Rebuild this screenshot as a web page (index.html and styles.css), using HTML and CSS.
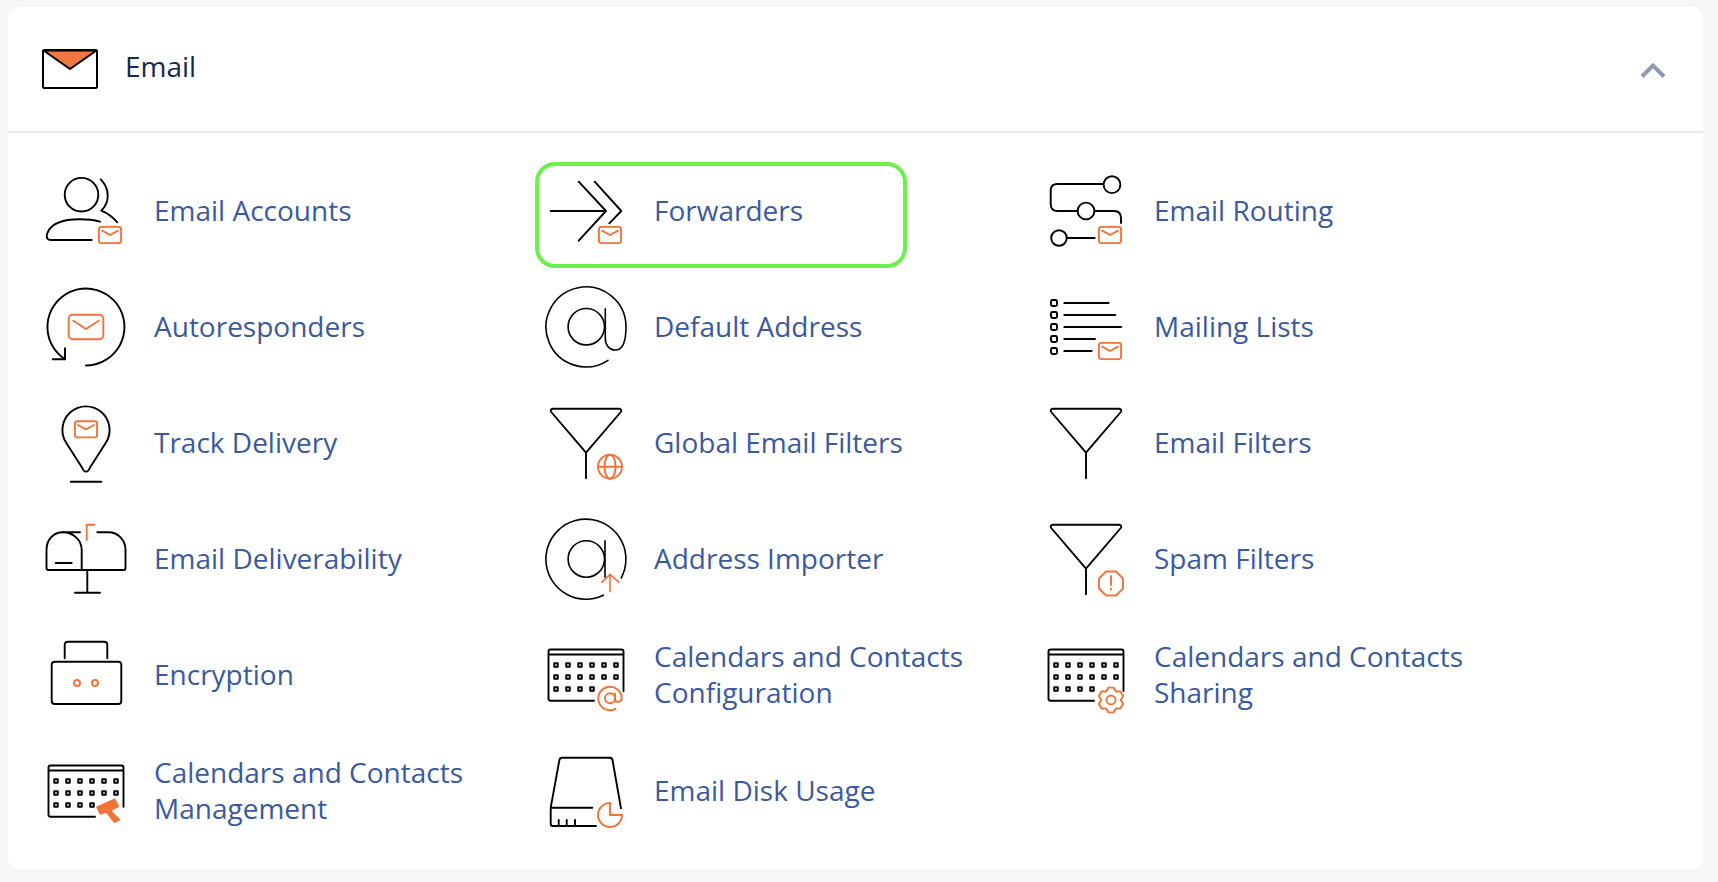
FILE: index.html
```html
<!DOCTYPE html>
<html lang="en">
<head>
    <meta charset="UTF-8">
    <meta name="viewport" content="width=device-width, initial-scale=1.0">
    <title>Email</title>
    <link rel="stylesheet" href="styles.css">
</head>
<body>
    <!-- Shared icon parts -->
    <svg class="sprite" aria-hidden="true">
        <defs>
            <g id="mail-badge">
                <rect class="accent" x="54.9" y="57.9" width="22.2" height="16.2" rx="2.5"/>
                <path class="accent" d="M58 61.7L66 66L74 61.7"/>
            </g>
            <path id="funnel" d="M9 7.7H75C77 7.7 78 9.5 76.8 11L42 51.7L7.2 11C6 9.5 7 7.7 9 7.7ZM42 51.7V77.3"/>
            <path id="calendar-dots" d="M10.2 30.2h3.6v3.6h-3.6zM22.2 30.2h3.6v3.6h-3.6zM34.2 30.2h3.6v3.6h-3.6zM46.2 30.2h3.6v3.6h-3.6zM58.2 30.2h3.6v3.6h-3.6zM70.2 30.2h3.6v3.6h-3.6zM10.2 42.2h3.6v3.6h-3.6zM22.2 42.2h3.6v3.6h-3.6zM34.2 42.2h3.6v3.6h-3.6zM46.2 42.2h3.6v3.6h-3.6zM58.2 42.2h3.6v3.6h-3.6zM70.2 42.2h3.6v3.6h-3.6zM10.2 54.2h3.6v3.6h-3.6zM22.2 54.2h3.6v3.6h-3.6zM34.2 54.2h3.6v3.6h-3.6zM46.2 54.2h3.6v3.6h-3.6z"/>
        </defs>
    </svg>

    <section class="card">
        <header class="card-header">
            <svg class="header-icon" viewBox="0 0 56 40">
                <path class="flap" d="M1.5 1.5H54.5L28 20Z"/>
                <rect class="outline" x="1" y="1" width="54" height="38" rx="1.5"/>
            </svg>
            <h2 class="card-title">Email</h2>
            <svg class="collapse-icon" viewBox="0 0 28 18">
                <path d="M3 16.5L14 5.5L25 16.5"/>
            </svg>
        </header>

        <div class="tool-grid">
            <!-- Row 1 -->
            <a class="tool" href="#">
                <svg class="tool-icon" viewBox="0 0 84 84">
                    <circle cx="37.5" cy="25.7" r="16.8"/>
                    <path d="M56.7 10.3C66 20 66 33 57.3 41.7C63 44 69 48.5 73.3 53.3"/>
                    <path d="M56 52.7C48 50.5 38 50 29 50.5C15 51.5 6 56 3 65C2 69 3.5 71 7 71H47.7"/>
                    <use href="#mail-badge"/>
                </svg>
                <span class="tool-name">Email Accounts</span>
            </a>
            <a class="tool selected" href="#">
                <svg class="tool-icon" viewBox="0 0 84 84">
                    <path d="M6.7 42H61M34.7 12.7L62 42L34.7 71.7M50.7 12.7L77.3 42L65.3 54.3"/>
                    <use href="#mail-badge"/>
                </svg>
                <span class="tool-name">Forwarders</span>
            </a>
            <a class="tool" href="#">
                <svg class="tool-icon" viewBox="0 0 84 84">
                    <circle cx="68" cy="15.7" r="8.4"/>
                    <circle cx="42" cy="42" r="8.4"/>
                    <circle cx="15" cy="69" r="7.8"/>
                    <path d="M59 15H13.5C9 15 6.7 17.5 6.7 21.5V35C6.7 39.5 9 42 13.5 42H33M51 42H70C74.5 42 77 44.5 77 49V54M23.5 69H50.7"/>
                    <use href="#mail-badge"/>
                </svg>
                <span class="tool-name">Email Routing</span>
            </a>

            <!-- Row 2 -->
            <a class="tool" href="#">
                <svg class="tool-icon" viewBox="0 0 84 84">
                    <path d="M42 80.5A38.5 38.5 0 1 0 21 74.3"/>
                    <path d="M8.7 74.3H21V63.3"/>
                    <rect class="accent" x="24.7" y="29.7" width="34.6" height="24.6" rx="4"/>
                    <path class="accent" d="M29.3 35.7L42 44L54.7 35.7"/>
                </svg>
                <span class="tool-name">Autoresponders</span>
            </a>
            <a class="tool" href="#">
                <svg class="tool-icon thin" viewBox="0 0 84 84">
                    <circle cx="42.3" cy="41.7" r="18.2"/>
                    <path d="M64 75.3A40 40 0 1 1 82 41.7C82 55 79 65 71.5 65C65 65 61.3 60 61.3 53V23.7"/>
                </svg>
                <span class="tool-name">Default Address</span>
            </a>
            <a class="tool" href="#">
                <svg class="tool-icon" viewBox="0 0 84 84">
                    <rect x="7" y="15" width="6" height="6" rx="1.5"/>
                    <rect x="7" y="27" width="6" height="6" rx="1.5"/>
                    <rect x="7" y="39" width="6" height="6" rx="1.5"/>
                    <rect x="7" y="51" width="6" height="6" rx="1.5"/>
                    <rect x="7" y="63" width="6" height="6" rx="1.5"/>
                    <path d="M20.3 18H64.7M20.3 30H71.3M20.3 42H77.3M20.3 54H51M20.3 66H47.7"/>
                    <use href="#mail-badge"/>
                </svg>
                <span class="tool-name">Mailing Lists</span>
            </a>

            <!-- Row 3 -->
            <a class="tool" href="#">
                <svg class="tool-icon" viewBox="0 0 84 84">
                    <path d="M38 66.5L22.5 42.3A23.6 23.6 0 1 1 61.5 42.3L46 66.5C44 72 40 72 38 66.5Z"/>
                    <path d="M26.7 80.7H57.3"/>
                    <rect class="accent" x="30.9" y="20.2" width="22.2" height="16.2" rx="2.5"/>
                    <path class="accent" d="M34 24L42 28.3L50 24"/>
                </svg>
                <span class="tool-name">Track Delivery</span>
            </a>
            <a class="tool" href="#">
                <svg class="tool-icon" viewBox="0 0 84 84">
                    <use href="#funnel"/>
                    <circle class="accent" cx="66" cy="65.7" r="12"/>
                    <ellipse class="accent" cx="66" cy="65.7" rx="5.5" ry="12"/>
                    <path class="accent" d="M54 65.7H78"/>
                </svg>
                <span class="tool-name">Global Email Filters</span>
            </a>
            <a class="tool" href="#">
                <svg class="tool-icon" viewBox="0 0 84 84">
                    <use href="#funnel"/>
                </svg>
                <span class="tool-name">Email Filters</span>
            </a>

            <!-- Row 4 -->
            <a class="tool" href="#">
                <svg class="tool-icon" viewBox="0 0 84 84">
                    <path d="M19 15.3C9 15.3 2.5 23 2.5 33V51C2.5 52.5 3 53 4.5 53H79.5C81 53 81.5 52.5 81.5 51V33C81.5 23 74 15.3 64.3 15.3H53.3"/>
                    <path d="M19 15.3H36M19 15.3C29 15.3 37.7 23 37.7 33V53M43.3 53V75.7M31 75.7H56M11.7 46H27.7"/>
                    <path class="accent" d="M42.7 23V7.7H50.3"/>
                </svg>
                <span class="tool-name">Email Deliverability</span>
            </a>
            <a class="tool" href="#">
                <svg class="tool-icon thin" viewBox="0 0 84 84">
                    <circle cx="42.3" cy="42" r="18.2"/>
                    <path d="M61 23.7V60.3"/>
                    <path d="M59.3 78.2A40 40 0 1 1 77.2 61"/>
                    <path class="accent" d="M66 74.7V57.3M57.7 65.3L66 57.3L75 65.3"/>
                </svg>
                <span class="tool-name">Address Importer</span>
            </a>
            <a class="tool" href="#">
                <svg class="tool-icon" viewBox="0 0 84 84">
                    <use href="#funnel"/>
                    <path class="accent" d="M62 54.5L72 54.5L79 61.5V71.5L72 78.5H62L55 71.5V61.5Z"/>
                    <path class="accent" d="M67 59V68M67 71.5V72.5"/>
                </svg>
                <span class="tool-name">Spam Filters</span>
            </a>

            <!-- Row 5 -->
            <a class="tool" href="#">
                <svg class="tool-icon" viewBox="0 0 84 84">
                    <rect x="7.7" y="28.7" width="69.6" height="42.3" rx="3"/>
                    <path d="M20.7 25.3V12C20.7 10 21.7 8.7 24 8.7H60C62.3 8.7 63.3 10 63.3 12V25.3"/>
                    <circle class="accent" cx="33" cy="50" r="3"/>
                    <circle class="accent" cx="51" cy="50" r="3"/>
                </svg>
                <span class="tool-name">Encryption</span>
            </a>
            <a class="tool" href="#">
                <svg class="tool-icon" viewBox="0 0 84 84">
                    <path d="M50 67.7H6.5C5 67.7 4.5 67 4.5 65.5V18.5C4.5 17 5 16.5 6.5 16.5H77.5C79 16.5 79.5 17 79.5 18.5V58M4.5 21.5H79.5"/>
                    <use href="#calendar-dots"/>
                    <circle class="accent" cx="66" cy="65.3" r="5"/>
                    <path class="accent" d="M71.5 75.8A11.7 11.7 0 1 1 77.7 65.3C77.7 69.5 71 70.5 71 66V60.5"/>
                </svg>
                <span class="tool-name">Calendars and Contacts<br>Configuration</span>
            </a>
            <a class="tool" href="#">
                <svg class="tool-icon" viewBox="0 0 84 84">
                    <path d="M50 67.7H6.5C5 67.7 4.5 67 4.5 65.5V18.5C4.5 17 5 16.5 6.5 16.5H77.5C79 16.5 79.5 17 79.5 18.5V58M4.5 21.5H79.5"/>
                    <use href="#calendar-dots"/>
                    <path class="accent" d="M69.6 54.6H64.4L62.1 58.5H57.6L54.9 63.1L57.2 67L54.9 70.9L57.6 75.5H62.1L64.4 79.4H69.6L71.9 75.5H76.4L79.1 70.9L76.8 67L79.1 63.1L76.4 58.5H71.9Z"/>
                    <circle class="accent" cx="67" cy="67" r="4.5"/>
                </svg>
                <span class="tool-name">Calendars and Contacts<br>Sharing</span>
            </a>

            <!-- Row 6 -->
            <a class="tool" href="#">
                <svg class="tool-icon" viewBox="0 0 84 84">
                    <path d="M51 67.7H6.5C5 67.7 4.5 67 4.5 65.5V18.5C4.5 17 5 16.5 6.5 16.5H77.5C79 16.5 79.5 17 79.5 18.5V57.7M4.5 21.5H79.5"/>
                    <use href="#calendar-dots"/>
                    <path class="hammer" d="M52 57.7L71 49.3L75.3 57.7L67.7 61.7L76.7 71L70.3 74.3L62 63.7L56 66Z"/>
                </svg>
                <span class="tool-name">Calendars and Contacts<br>Management</span>
            </a>
            <a class="tool" href="#">
                <svg class="tool-icon" viewBox="0 0 84 84">
                    <path d="M77 59.3L68.5 11C68.2 9.5 67.5 8.7 66 8.7H18C16.5 8.7 15.7 9.5 15.4 11L6.7 58.7V75C6.7 76.5 7.3 77 8.7 77H52M6.7 58.7H48.3M14.7 71V77M22.7 71V77M31 71V77"/>
                    <path class="accent" d="M66 54V66H78A12 12 0 1 1 66 54Z"/>
                </svg>
                <span class="tool-name">Email Disk Usage</span>
            </a>
        </div>
    </section>
</body>
</html>
```

FILE: styles.css
```css
body {
    margin: 0;
    padding: 7px 15px 13px 8px;
    background-color: #f6f6f6;
    font-family: "Open Sans", sans-serif;
}
.sprite {
    display: none;
}
.card {
    background-color: #fff;
    border-radius: 10px;
}
.card-header {
    display: flex;
    align-items: center;
    height: 124px;
    padding: 0 36px 0 34px;
    border-bottom: 2px solid #e6eaf5;
}
.header-icon {
    width: 56px;
    height: 40px;
    flex-shrink: 0;
}
.flap {
    fill: #ee7742;
    stroke: #000;
    stroke-width: 2;
    stroke-linejoin: round;
}
.outline {
    fill: none;
    stroke: #000;
    stroke-width: 2;
}
.card-title {
    margin: -6px 0 0 27px;
    font-size: 28px;
    font-weight: 400;
    color: #17294a;
}
.collapse-icon {
    width: 28px;
    height: 18px;
    margin-left: auto;
    fill: none;
    stroke: #8e99b4;
    stroke-width: 4;
}
.tool-grid {
    display: grid;
    grid-template-columns: repeat(3, 500px);
    grid-auto-rows: 106px;
    row-gap: 10px;
    padding: 29px 0 21px 27px;
}
.tool {
    display: flex;
    align-items: center;
    gap: 26px;
    width: 372px;
    box-sizing: border-box;
    padding: 3px 0 11px 5px;
    border: 4px solid transparent;
    border-radius: 20px;
    color: #3b5a9d;
    text-decoration: none;
    font-size: 28px;
    line-height: 36px;
}
.tool.selected {
    border-color: #6df04b;
}
.tool-name {
    white-space: nowrap;
    margin-top: -2px;
}
.tool-icon {
    width: 84px;
    height: 84px;
    flex-shrink: 0;
    fill: none;
    stroke: #000;
    stroke-width: 1.9;
    stroke-linecap: round;
    stroke-linejoin: round;
}
.tool-icon.thin {
    stroke-width: 1.6;
}
.accent {
    stroke: #f0733a;
}
.hammer {
    fill: #f0733a;
    stroke: none;
}
```
